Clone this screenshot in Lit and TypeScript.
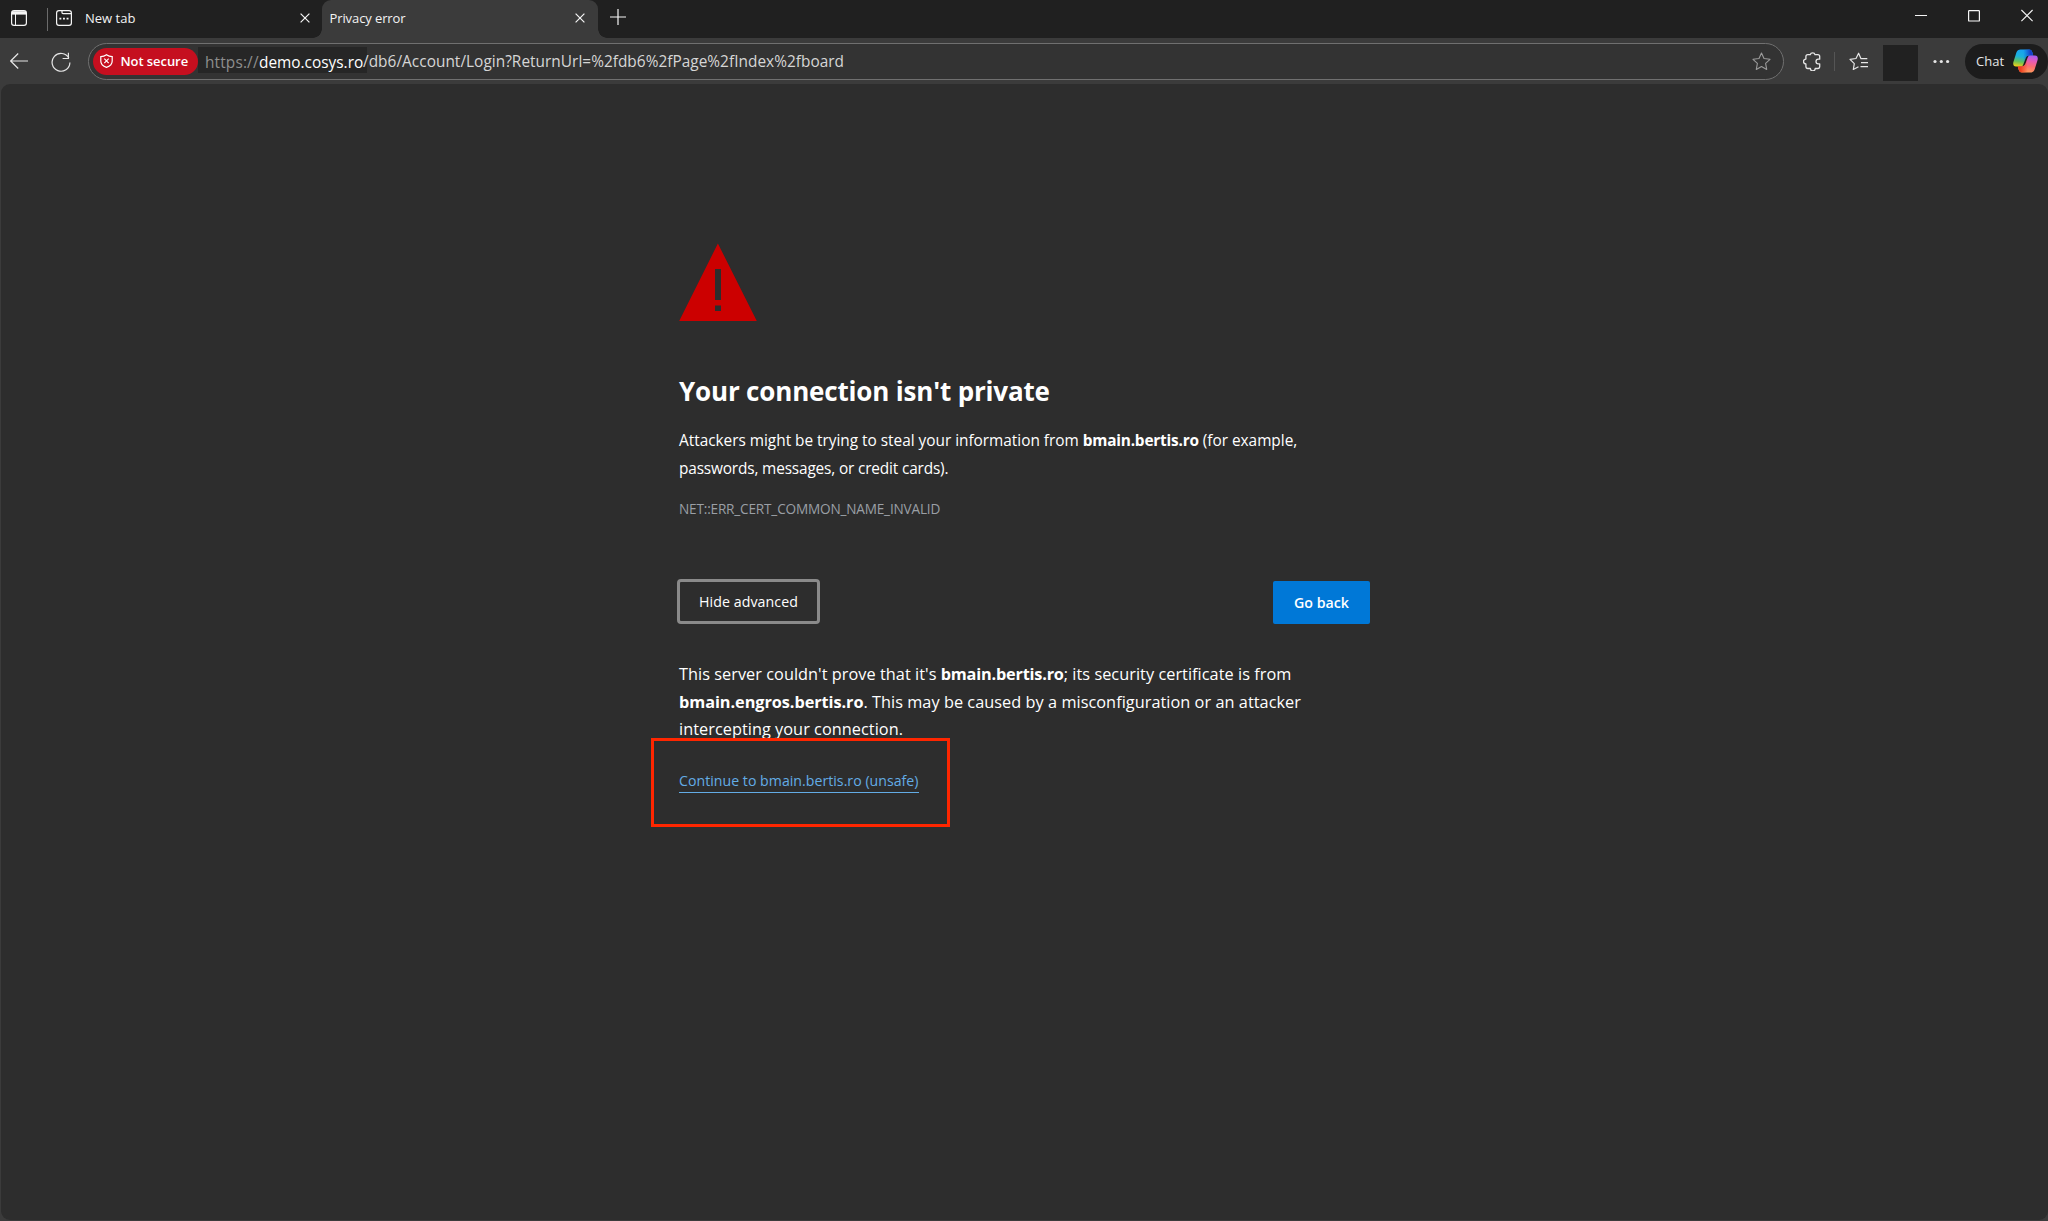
import { LitElement, html, css, svg } from "lit";
import { customElement } from "lit/decorators.js";

const closeIcon = (size: number) => html`<svg class="icon" width=${size} height=${size} viewBox="0 0 10 10"><path d="M.6 .6 9.4 9.4M9.4 .6 .6 9.4" stroke-width="1.2" /></svg>`;

const ribbon = "M7.5 .5H16C18 .5 18.8 1.7 19.3 3.3L20.3 6.6H17C14.6 6.6 13.4 7.3 12.7 9L10.3 15.4C9.7 17 8.8 17.5 7.4 17.5H3C.6 17.5-.2 15.5 .4 13L3.4 3.6C4.1 1.5 5.5 .5 7.5 .5Z";

const copilotIcon = svg`
  <defs>
    <linearGradient id="cool" x1="0.4" y1="0" x2="0.2" y2="1">
      <stop offset="0" stop-color="#18a0f2" /><stop offset=".4" stop-color="#1bb1dd" />
      <stop offset=".7" stop-color="#62c05c" /><stop offset="1" stop-color="#f5d016" />
    </linearGradient>
    <linearGradient id="deep" x1="0" y1="0" x2="1" y2="0">
      <stop offset=".5" stop-color="#1551d8" stop-opacity="0" /><stop offset=".85" stop-color="#1740c8" />
    </linearGradient>
    <linearGradient id="warm" x1="0.4" y1="0" x2="0.2" y2="1">
      <stop offset="0" stop-color="#ff9a5c" /><stop offset=".35" stop-color="#fb6d72" />
      <stop offset=".65" stop-color="#e85bb4" /><stop offset="1" stop-color="#a35cf5" />
    </linearGradient>
    <linearGradient id="ember" x1="0" y1="0" x2="1" y2="0">
      <stop offset=".5" stop-color="#f23b1c" stop-opacity="0" /><stop offset=".85" stop-color="#f0401f" />
    </linearGradient>
  </defs>
  <path d=${ribbon} fill="url(#cool)" /><path d=${ribbon} fill="url(#deep)" />
  <g transform="rotate(180 12.5 12)"><path d=${ribbon} fill="url(#warm)" /><path d=${ribbon} fill="url(#ember)" /></g>`;

@customElement("browser-tabs")
class BrowserTabs extends LitElement {
  static styles = css`
    :host { display: flex; height: 38px; background: #202020; color: #f3f3f3; font: 13px/20px "Open Sans", sans-serif; }
    svg { display: block; flex: none; }
    .icon { fill: none; stroke: #f5f5f5; }
    .start { display: flex; width: 322px; box-sizing: border-box; padding: 8px 11px 0 11px; align-items: flex-start; }
    .menu { margin: 2px 19.5px 0 0; }
    .rule { width: 1px; height: 23px; background: #6b6b6b; margin-right: 8.5px; }
    .page { margin: 2px 13px 0 0; }
    .title { flex: 1; white-space: nowrap; }
    .start .close { margin: 5px 1px 0 0; }
    .active { position: relative; display: flex; width: 276px; box-sizing: border-box; padding: 8px 13px 0 7.5px; background: #3b3b3b; border-radius: 9px 9px 0 0; letter-spacing: -0.1px; }
    .active .close { margin-top: 5px; }
    .active::before, .active::after { content: ""; position: absolute; bottom: 0; width: 9px; height: 9px; }
    .active::before { left: -9px; background: radial-gradient(circle at 0 0, transparent 8.5px, #3b3b3b 9px); }
    .active::after { right: -9px; background: radial-gradient(circle at 100% 0, transparent 8.5px, #3b3b3b 9px); }
    .new { margin: 9px 0 0 12px; }
    .controls { display: flex; margin: 9px 15px 0 auto; gap: 41px; }
  `;
  render() {
    return html`
      <div class="start">
        <svg class="icon menu" width="16" height="16" viewBox="0 0 16 16" stroke-width="1.2"><rect x=".6" y=".6" width="14.8" height="14.8" rx="2.4" /><path d="M1 1.2h14v3.4H1z" fill="#f5f5f5" stroke="none" /><path d="M4.5 4v11.4" stroke-width="1" /></svg>
        <div class="rule"></div>
        <svg class="icon page" width="16" height="16" viewBox="0 0 16 16" stroke-width="1.2"><rect x=".6" y=".6" width="14.8" height="14.8" rx="2.4" /><path d="M6 .8v1.8q0 1.1 1.1 1.1h8.2" /><path d="M3.4 8.6h1.9M7 8.6h1.9M10.6 8.6h1.9" stroke-width="1.8" /></svg>
        <span class="title">New tab</span>
        <span class="close">${closeIcon(10)}</span>
      </div>
      <div class="active"><span class="title">Privacy error</span><span class="close">${closeIcon(10)}</span></div>
      <svg class="icon new" width="16" height="16" viewBox="0 0 16 16"><path d="M8 0v16M0 8h16" stroke-width="1.2" /></svg>
      <div class="controls">
        <svg class="icon" width="12" height="13" viewBox="0 0 12 13"><path d="M0 6.5h12" stroke-width="1" /></svg>
        <svg class="icon" width="12" height="13" viewBox="0 0 12 13"><rect x=".6" y="1.6" width="10.8" height="10.4" rx=".6" stroke-width="1.2" /></svg>
        <svg class="icon" width="12" height="13" viewBox="0 0 12 13"><path d="M.4 1 11.6 12.2M11.6 1 .4 12.2" stroke-width="1.1" /></svg>
      </div>`;
  }
}

@customElement("browser-toolbar")
class BrowserToolbar extends LitElement {
  static styles = css`
    :host { display: flex; height: 46px; background: #3b3b3b; box-sizing: border-box; padding: 5px 0 0 10px; align-items: flex-start; font-family: "Open Sans", sans-serif; }
    svg { display: block; flex: none; }
    .address, .rule, .profile, .chat, .warning { flex: none; }
    .icon { fill: none; stroke: #e6e6e6; }
    .back { margin-top: 10px; }
    .reload { margin: 9px 0 0 22.5px; }
    .address { display: flex; box-sizing: border-box; width: 1696px; height: 37px; margin-left: 17.5px; padding: 4px 12px 0 4px; border: 1px solid #707070; border-radius: 19px; background: #333; }
    .warning { display: flex; align-items: center; gap: 7.5px; width: 105px; height: 27px; box-sizing: border-box; padding: 0 0 1px 7px; border-radius: 14px; background: #c50f1f; color: #fff; font-size: 13px; font-weight: 600; letter-spacing: -0.07px; white-space: nowrap; }
    .warning .icon { stroke: #fff; }
    .url { display: flex; color: #d6d6d6; font-size: 15.4px; line-height: 28px; white-space: nowrap; }
    .origin { display: flex; width: 169px; height: 26px; margin-top: -1px; box-sizing: border-box; padding: 2px 0 0 7px; background: #262626; }
    .scheme { color: #8e8e8e; letter-spacing: 0.15px; width: 54px; }
    .host { color: #fff; }
    .path { letter-spacing: 0.03px; margin-left: -4px; }
    .star { margin: 4px 0 0 auto; }
    .puzzle { margin: 9px 0 0 18.5px; }
    .rule { width: 1px; height: 19px; margin: 9px 0 0 12.5px; background: #555; }
    .favorites { margin: 9px 0 0 14px; }
    .profile { width: 35px; height: 36px; margin: 2px 0 0 15px; background: #212121; }
    .more { margin: 16px 0 0 15px; }
    .chat { display: flex; align-items: center; justify-content: space-between; box-sizing: border-box; width: 83px; height: 35px; margin: 1px 0 0 15px; padding: 0 10px 2px 11px; border-radius: 18px; background: #1c1c1c; color: #e6e6e6; font-size: 13px; }
  `;
  render() {
    return html`
      <svg class="icon back" width="18" height="16" viewBox="0 0 18 16"><path d="M8.2 .5.7 8l7.5 7.5M.7 8H18" stroke-width="1.2" /></svg>
      <svg class="icon reload" width="20" height="20" viewBox="0 0 20 20"><path d="M17.9 6.2A8.9 8.9 0 1 0 18.9 10.4M17.4 .8V6.5H11.6" stroke-width="1.2" /></svg>
      <div class="address">
        <div class="warning">
          <svg class="icon" width="13" height="14" viewBox="0 0 13 14"><path d="M6.5 .7C4.8 1.9 2.9 2.5 .8 2.6V7c0 3 2.2 5.2 5.7 6.4 3.5-1.2 5.7-3.4 5.7-6.4V2.6C10.1 2.5 8.2 1.9 6.5 .7Z" stroke-width="1.2" /><path d="M4.3 4.7l4.4 4.4M8.7 4.7 4.3 9.1" stroke-width="1.2" /></svg>
          <span>Not secure</span>
        </div>
        <div class="url"><div class="origin"><span class="scheme">https://</span><span class="host">demo.cosys.ro</span></div><span class="path">/db6/Account/Login?ReturnUrl=%2fdb6%2fPage%2fIndex%2fboard</span></div>
        <svg class="icon star" width="19" height="19" viewBox="0 0 19 19"><path d="M9.5 1l2.5 5.5 6 .8-4.4 4.1 1.1 6-5.2-2.9-5.2 2.9 1.1-6L1 7.3l6-.8Z" stroke="#9b9b9b" stroke-width="1.1" stroke-linejoin="round" /></svg>
      </div>
      <svg class="icon puzzle" width="19" height="19" viewBox="0 0 19 19"><path d="M4.8 2.7H7.3A2.4 2.4 0 0 1 12 2.7H14.8Q16.7 2.7 16.7 4.6V7.2H15.3A2.3 2.3 0 0 0 15.3 11.8H16.7V14.6Q16.7 16.5 14.8 16.5H12.2A2.4 2.4 0 0 1 7.4 16.5H4.8Q2.9 16.5 2.9 14.6V11.9A2.4 2.4 0 0 1 2.9 7.1V4.6Q2.9 2.7 4.8 2.7Z" stroke-width="1.3" stroke-linejoin="round" /></svg>
      <div class="rule"></div>
      <svg class="icon favorites" width="19" height="19" viewBox="0 0 19 19"><path d="M18.3 6.7H12L9.6 1.2 7 6.5 1 7.4l4.3 4.2-1 5.9 5.2-2.8M12 10.6h7M11.5 14.6H19" stroke-width="1.2" stroke-linejoin="round" /></svg>
      <div class="profile"></div>
      <svg class="more" width="17" height="5" viewBox="0 0 17 5" fill="#e6e6e6"><circle cx="2" cy="2.5" r="1.6" /><circle cx="8.3" cy="2.5" r="1.6" /><circle cx="14.6" cy="2.5" r="1.6" /></svg>
      <div class="chat"><span>Chat</span><svg width="25" height="24" viewBox="0 0 25 24">${copilotIcon}</svg></div>`;
  }
}

@customElement("privacy-error")
class PrivacyError extends LitElement {
  static styles = css`
    :host { display: block; flex: 1; box-sizing: border-box; margin: 0 0 1px 1px; padding: 159px 678px 0 678px; background: #2d2d2d; border-radius: 9px; color: #fff; font-family: "Open Sans", sans-serif; }
    svg { display: block; }
    h1 { margin: 52px 0 0; font-size: 26px; line-height: 36px; font-weight: 700; letter-spacing: -0.17px; white-space: nowrap; }
    p { margin: 0; line-height: 27.7px; white-space: nowrap; }
    b { font-weight: 700; }
    .summary { margin-top: 18px; font-size: 15.4px; letter-spacing: -0.02px; }
    .summary b { letter-spacing: -0.2px; }
    .tight { letter-spacing: -0.16px; }
    .code { margin-top: 13px; font-size: 13.6px; letter-spacing: -0.18px; color: #9a9fa5; }
    .actions { display: flex; justify-content: space-between; margin: 55.5px 0 0 -2px; font-size: 14.2px; }
    .hide { box-sizing: border-box; width: 143px; height: 45px; border: 3px solid #8a8a8a; border-radius: 4px; line-height: 40px; text-align: center; letter-spacing: 0.06px; }
    .back { width: 97px; height: 43px; margin: 2px 0 0; border-radius: 2px; background: #0078d7; font-weight: 600; line-height: 43.6px; text-align: center; }
    .details { margin-top: 37.3px; font-size: 16.3px; letter-spacing: 0.04px; }
    .details b { letter-spacing: -0.2px; }
    .details .issuer { letter-spacing: -0.06px; }
    .proceed { position: relative; margin-top: 25px; }
    .link { display: inline-block; font-size: 14.15px; line-height: 22px; letter-spacing: 0.02px; color: #63ace5; border-bottom: 1.5px solid #63ace5; white-space: nowrap; }
    .highlight { position: absolute; left: -28px; top: -31.5px; width: 293px; height: 83px; border: 3px solid #ff2600; }
  `;
  render() {
    return html`
      <svg width="78" height="78" viewBox="0 0 78 78"><path d="M38.9 .5 77.8 78H.2ZM36 26V57H42V26ZM36 62.5V68H42V62.5Z" fill="#c00" fill-rule="evenodd" /></svg>
      <h1>Your connection isn't private</h1>
      <p class="summary">Attackers might be trying to steal your information from <b>bmain.bertis.ro</b> (for example,<br /><span class="tight">passwords, messages, or credit cards).</span></p>
      <p class="code">NET::ERR_CERT_COMMON_NAME_INVALID</p>
      <div class="actions"><div class="hide">Hide advanced</div><div class="back">Go back</div></div>
      <p class="details">This server couldn't prove that it's <b>bmain.bertis.ro</b>; its security certificate is from<br /><b class="issuer">bmain.engros.bertis.ro</b>. This may be caused by a misconfiguration or an attacker<br />intercepting your connection.</p>
      <div class="proceed"><span class="link">Continue to bmain.bertis.ro (unsafe)</span><div class="highlight"></div></div>`;
  }
}

@customElement("app-root")
class AppRoot extends LitElement {
  static styles = css`
    :host { display: flex; flex-direction: column; height: 1221px; width: 2048px; overflow: hidden; background: #3b3b3b; }
  `;
  render() {
    return html`<browser-tabs></browser-tabs><browser-toolbar></browser-toolbar><privacy-error></privacy-error>`;
  }
}
